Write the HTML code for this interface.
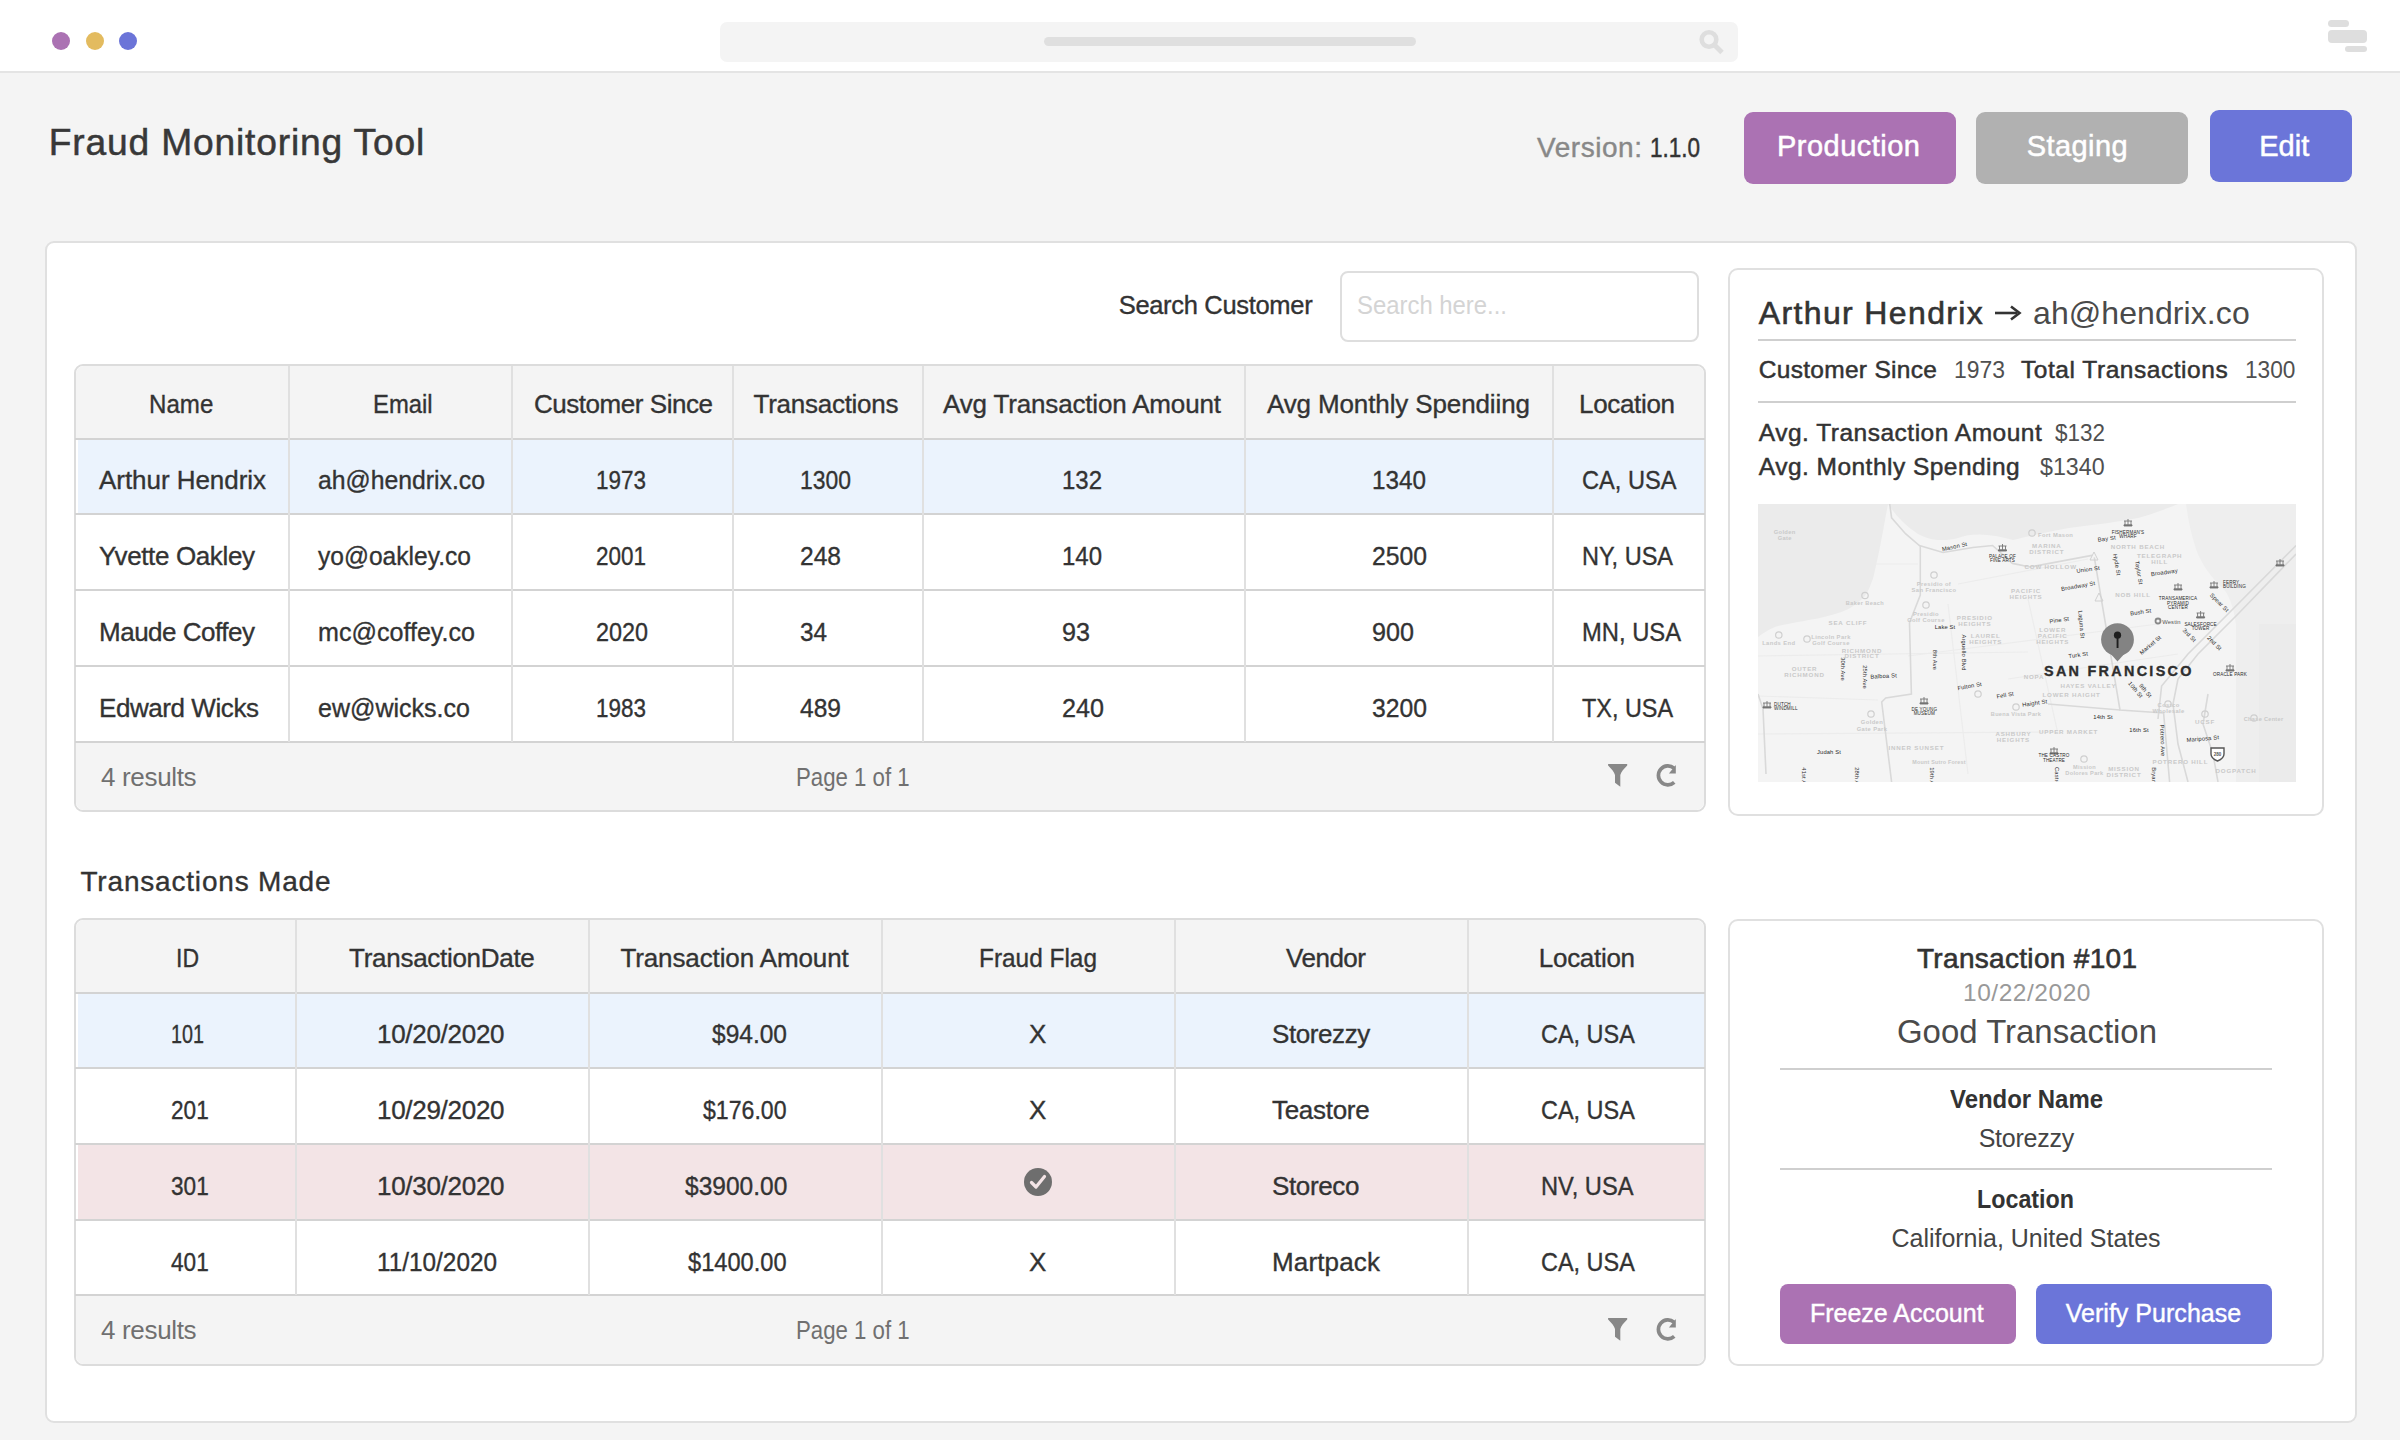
<!DOCTYPE html>
<html><head><meta charset="utf-8"><title>Fraud Monitoring Tool</title>
<style>
html,body{margin:0;padding:0;}
body{width:2400px;height:1440px;position:relative;overflow:hidden;background:#f4f4f4;font-family:"Liberation Sans",sans-serif;}
.t{position:absolute;white-space:nowrap;}
</style></head><body>
<div style="position:absolute;left:0px;top:0px;width:2400px;height:71px;background:#fff;"></div>
<div style="position:absolute;left:0px;top:71px;width:2400px;height:2px;background:#e4e4e4;"></div>
<div style="position:absolute;left:52px;top:32px;width:18px;height:18px;background:#ab72b3;border-radius:50%;"></div>
<div style="position:absolute;left:85.5px;top:32px;width:18px;height:18px;background:#e3bb5f;border-radius:50%;"></div>
<div style="position:absolute;left:119px;top:32px;width:18px;height:18px;background:#6b74d8;border-radius:50%;"></div>
<div style="position:absolute;left:720px;top:22px;width:1018px;height:40px;background:#f4f4f4;border-radius:7px;"></div>
<div style="position:absolute;left:1044px;top:37px;width:372px;height:9px;background:#dfdfdf;border-radius:5px;"></div>
<svg style="position:absolute;left:1690px;top:22px" width="40" height="40" viewBox="0 0 40 40"><circle cx="19" cy="17.5" r="7.3" fill="none" stroke="#dedede" stroke-width="4.6"/><line x1="24" y1="22.5" x2="32" y2="30.5" stroke="#dedede" stroke-width="5"/></svg>
<div style="position:absolute;left:2328px;top:20px;width:21px;height:7px;background:#dedede;border-radius:3.5px;"></div>
<div style="position:absolute;left:2328px;top:30px;width:39px;height:13px;background:#dedede;border-radius:4px;"></div>
<div style="position:absolute;left:2345px;top:46px;width:22px;height:6px;background:#dedede;border-radius:3px;"></div>
<div class="t" style="left:48.8px;top:123.5px;font-size:37.2px;line-height:37.2px;color:#383838;font-weight:normal;letter-spacing:0.82px;-webkit-text-stroke:0.5px #383838;">Fraud Monitoring Tool</div>
<div class="t" style="left:1537.0px;top:134.3px;font-size:28px;line-height:28px;color:#888;font-weight:normal;letter-spacing:0.55px;-webkit-text-stroke:0.4px #888;">Version:</div>
<div class="t" style="left:1649.5px;top:134.3px;font-size:28px;line-height:28px;color:#333;font-weight:normal;letter-spacing:0.00px;transform:scaleX(0.8029);transform-origin:0 0;-webkit-text-stroke:0.5px #333;">1.1.0</div>
<div style="position:absolute;left:1744px;top:112px;width:212px;height:72px;background:#ab72b3;border-radius:9px;"></div>
<div style="position:absolute;left:1976px;top:112px;width:212px;height:72px;background:#b1b1b1;border-radius:9px;"></div>
<div style="position:absolute;left:2210px;top:110px;width:142px;height:72px;background:#6b75d9;border-radius:9px;"></div>
<div class="t" style="left:1777.0px;top:131.8px;font-size:29px;line-height:29px;color:#fff;font-weight:normal;letter-spacing:0.48px;-webkit-text-stroke:0.5px #fff;">Production</div>
<div class="t" style="left:2026.7px;top:131.8px;font-size:29px;line-height:29px;color:#fff;font-weight:normal;letter-spacing:0.44px;-webkit-text-stroke:0.5px #fff;">Staging</div>
<div class="t" style="left:2259.2px;top:131.8px;font-size:29px;line-height:29px;color:#fff;font-weight:normal;letter-spacing:0.01px;-webkit-text-stroke:0.5px #fff;">Edit</div>
<div style="position:absolute;left:45px;top:241px;width:2312px;height:1182px;background:#fff;border:2px solid #e0e0e0;border-radius:9px;box-sizing:border-box;"></div>
<div class="t" style="left:1118.7px;top:292.9px;font-size:25.5px;line-height:25.5px;color:#333;font-weight:normal;letter-spacing:-0.32px;-webkit-text-stroke:0.35px #333;">Search Customer</div>
<div style="position:absolute;left:1340px;top:271px;width:359px;height:71px;background:#fff;border:2px solid #dedede;border-radius:8px;box-sizing:border-box;"></div>
<div class="t" style="left:1357.0px;top:292.9px;font-size:25.5px;line-height:25.5px;color:#d4d4d4;font-weight:normal;letter-spacing:0.00px;transform:scaleX(0.9365);transform-origin:0 0;">Search here...</div>
<div style="position:absolute;left:74px;top:364px;width:1632px;height:448px;background:#fff;border:2px solid #dcdcdc;border-radius:9px;box-sizing:border-box;overflow:hidden;"></div>
<div style="position:absolute;left:76px;top:366px;width:1628px;height:73px;background:#f4f4f4;border-radius:8px 8px 0 0;"></div>
<div style="position:absolute;left:76px;top:743px;width:1628px;height:67px;background:#f4f4f4;border-radius:0 0 8px 8px;"></div>
<div style="position:absolute;left:78px;top:440px;width:1626px;height:73px;background:#ebf3fd;"></div>
<div style="position:absolute;left:75px;top:438px;width:1630px;height:2px;background:#d3d3d3;"></div>
<div style="position:absolute;left:75px;top:513px;width:1630px;height:2px;background:#d3d3d3;"></div>
<div style="position:absolute;left:75px;top:589px;width:1630px;height:2px;background:#d3d3d3;"></div>
<div style="position:absolute;left:75px;top:665px;width:1630px;height:2px;background:#d3d3d3;"></div>
<div style="position:absolute;left:75px;top:741px;width:1630px;height:2px;background:#d3d3d3;"></div>
<div style="position:absolute;left:288px;top:366px;width:2px;height:376px;background:#e0e0e0;"></div>
<div style="position:absolute;left:511px;top:366px;width:2px;height:376px;background:#e0e0e0;"></div>
<div style="position:absolute;left:732px;top:366px;width:2px;height:376px;background:#e0e0e0;"></div>
<div style="position:absolute;left:922px;top:366px;width:2px;height:376px;background:#e0e0e0;"></div>
<div style="position:absolute;left:1244px;top:366px;width:2px;height:376px;background:#e0e0e0;"></div>
<div style="position:absolute;left:1552px;top:366px;width:2px;height:376px;background:#e0e0e0;"></div>
<div class="t" style="left:148.8px;top:391.0px;font-size:26px;line-height:26px;color:#333;font-weight:normal;letter-spacing:0.00px;transform:scaleX(0.9271);transform-origin:0 0;-webkit-text-stroke:0.35px #333;">Name</div>
<div class="t" style="left:373.0px;top:391.0px;font-size:26px;line-height:26px;color:#333;font-weight:normal;letter-spacing:0.00px;transform:scaleX(0.9167);transform-origin:0 0;-webkit-text-stroke:0.35px #333;">Email</div>
<div class="t" style="left:534.0px;top:391.0px;font-size:26px;line-height:26px;color:#333;font-weight:normal;letter-spacing:-0.46px;-webkit-text-stroke:0.35px #333;">Customer Since</div>
<div class="t" style="left:753.5px;top:391.0px;font-size:26px;line-height:26px;color:#333;font-weight:normal;letter-spacing:-0.26px;-webkit-text-stroke:0.35px #333;">Transactions</div>
<div class="t" style="left:943.0px;top:391.0px;font-size:26px;line-height:26px;color:#333;font-weight:normal;letter-spacing:-0.16px;-webkit-text-stroke:0.35px #333;">Avg Transaction Amount</div>
<div class="t" style="left:1266.9px;top:391.0px;font-size:26px;line-height:26px;color:#333;font-weight:normal;letter-spacing:-0.12px;-webkit-text-stroke:0.35px #333;">Avg Monthly Spendiing</div>
<div class="t" style="left:1579.0px;top:391.0px;font-size:26px;line-height:26px;color:#333;font-weight:normal;letter-spacing:-0.33px;-webkit-text-stroke:0.35px #333;">Location</div>
<div class="t" style="left:99.0px;top:466.7px;font-size:26px;line-height:26px;color:#333;font-weight:normal;letter-spacing:-0.05px;-webkit-text-stroke:0.35px #333;">Arthur Hendrix</div>
<div class="t" style="left:318.0px;top:466.7px;font-size:26px;line-height:26px;color:#333;font-weight:normal;letter-spacing:0.00px;transform:scaleX(0.9528);transform-origin:0 0;-webkit-text-stroke:0.35px #333;">ah@hendrix.co</div>
<div class="t" style="left:596.0px;top:466.7px;font-size:26px;line-height:26px;color:#333;font-weight:normal;letter-spacing:0.00px;transform:scaleX(0.8644);transform-origin:0 0;-webkit-text-stroke:0.35px #333;">1973</div>
<div class="t" style="left:800.0px;top:466.7px;font-size:26px;line-height:26px;color:#333;font-weight:normal;letter-spacing:0.00px;transform:scaleX(0.8817);transform-origin:0 0;-webkit-text-stroke:0.35px #333;">1300</div>
<div class="t" style="left:1062.0px;top:466.7px;font-size:26px;line-height:26px;color:#333;font-weight:normal;letter-spacing:0.00px;transform:scaleX(0.9221);transform-origin:0 0;-webkit-text-stroke:0.35px #333;">132</div>
<div class="t" style="left:1372.0px;top:466.7px;font-size:26px;line-height:26px;color:#333;font-weight:normal;letter-spacing:0.00px;transform:scaleX(0.9336);transform-origin:0 0;-webkit-text-stroke:0.35px #333;">1340</div>
<div class="t" style="left:1582.0px;top:466.7px;font-size:26px;line-height:26px;color:#333;font-weight:normal;letter-spacing:0.00px;transform:scaleX(0.9084);transform-origin:0 0;-webkit-text-stroke:0.35px #333;">CA, USA</div>
<div class="t" style="left:99.0px;top:542.7px;font-size:26px;line-height:26px;color:#333;font-weight:normal;letter-spacing:-0.37px;-webkit-text-stroke:0.35px #333;">Yvette Oakley</div>
<div class="t" style="left:318.0px;top:542.7px;font-size:26px;line-height:26px;color:#333;font-weight:normal;letter-spacing:0.00px;transform:scaleX(0.9458);transform-origin:0 0;-webkit-text-stroke:0.35px #333;">yo@oakley.co</div>
<div class="t" style="left:596.0px;top:542.7px;font-size:26px;line-height:26px;color:#333;font-weight:normal;letter-spacing:0.00px;transform:scaleX(0.8644);transform-origin:0 0;-webkit-text-stroke:0.35px #333;">2001</div>
<div class="t" style="left:800.0px;top:542.7px;font-size:26px;line-height:26px;color:#333;font-weight:normal;letter-spacing:0.00px;transform:scaleX(0.9451);transform-origin:0 0;-webkit-text-stroke:0.35px #333;">248</div>
<div class="t" style="left:1062.0px;top:542.7px;font-size:26px;line-height:26px;color:#333;font-weight:normal;letter-spacing:0.00px;transform:scaleX(0.9221);transform-origin:0 0;-webkit-text-stroke:0.35px #333;">140</div>
<div class="t" style="left:1372.0px;top:542.7px;font-size:26px;line-height:26px;color:#333;font-weight:normal;letter-spacing:0.00px;transform:scaleX(0.9509);transform-origin:0 0;-webkit-text-stroke:0.35px #333;">2500</div>
<div class="t" style="left:1582.0px;top:542.7px;font-size:26px;line-height:26px;color:#333;font-weight:normal;letter-spacing:0.00px;transform:scaleX(0.9039);transform-origin:0 0;-webkit-text-stroke:0.35px #333;">NY, USA</div>
<div class="t" style="left:99.0px;top:618.7px;font-size:26px;line-height:26px;color:#333;font-weight:normal;letter-spacing:-0.49px;-webkit-text-stroke:0.35px #333;">Maude Coffey</div>
<div class="t" style="left:318.0px;top:618.7px;font-size:26px;line-height:26px;color:#333;font-weight:normal;letter-spacing:0.00px;transform:scaleX(0.9649);transform-origin:0 0;-webkit-text-stroke:0.35px #333;">mc@coffey.co</div>
<div class="t" style="left:596.0px;top:618.7px;font-size:26px;line-height:26px;color:#333;font-weight:normal;letter-spacing:0.00px;transform:scaleX(0.8990);transform-origin:0 0;-webkit-text-stroke:0.35px #333;">2020</div>
<div class="t" style="left:800.0px;top:618.7px;font-size:26px;line-height:26px;color:#333;font-weight:normal;letter-spacing:0.00px;transform:scaleX(0.9336);transform-origin:0 0;-webkit-text-stroke:0.35px #333;">34</div>
<div class="t" style="left:1062.0px;top:618.7px;font-size:26px;line-height:26px;color:#333;font-weight:normal;letter-spacing:0.00px;transform:scaleX(0.9682);transform-origin:0 0;-webkit-text-stroke:0.35px #333;">93</div>
<div class="t" style="left:1372.0px;top:618.7px;font-size:26px;line-height:26px;color:#333;font-weight:normal;letter-spacing:0.00px;transform:scaleX(0.9682);transform-origin:0 0;-webkit-text-stroke:0.35px #333;">900</div>
<div class="t" style="left:1582.0px;top:618.7px;font-size:26px;line-height:26px;color:#333;font-weight:normal;letter-spacing:0.00px;transform:scaleX(0.9138);transform-origin:0 0;-webkit-text-stroke:0.35px #333;">MN, USA</div>
<div class="t" style="left:99.0px;top:694.7px;font-size:26px;line-height:26px;color:#333;font-weight:normal;letter-spacing:-0.43px;-webkit-text-stroke:0.35px #333;">Edward Wicks</div>
<div class="t" style="left:318.0px;top:694.7px;font-size:26px;line-height:26px;color:#333;font-weight:normal;letter-spacing:0.00px;transform:scaleX(0.9628);transform-origin:0 0;-webkit-text-stroke:0.35px #333;">ew@wicks.co</div>
<div class="t" style="left:596.0px;top:694.7px;font-size:26px;line-height:26px;color:#333;font-weight:normal;letter-spacing:0.00px;transform:scaleX(0.8644);transform-origin:0 0;-webkit-text-stroke:0.35px #333;">1983</div>
<div class="t" style="left:800.0px;top:694.7px;font-size:26px;line-height:26px;color:#333;font-weight:normal;letter-spacing:0.00px;transform:scaleX(0.9451);transform-origin:0 0;-webkit-text-stroke:0.35px #333;">489</div>
<div class="t" style="left:1062.0px;top:694.7px;font-size:26px;line-height:26px;color:#333;font-weight:normal;letter-spacing:0.00px;transform:scaleX(0.9682);transform-origin:0 0;-webkit-text-stroke:0.35px #333;">240</div>
<div class="t" style="left:1372.0px;top:694.7px;font-size:26px;line-height:26px;color:#333;font-weight:normal;letter-spacing:0.00px;transform:scaleX(0.9509);transform-origin:0 0;-webkit-text-stroke:0.35px #333;">3200</div>
<div class="t" style="left:1582.0px;top:694.7px;font-size:26px;line-height:26px;color:#333;font-weight:normal;letter-spacing:0.00px;transform:scaleX(0.8998);transform-origin:0 0;-webkit-text-stroke:0.35px #333;">TX, USA</div>
<div class="t" style="left:101.0px;top:764.2px;font-size:26px;line-height:26px;color:#707070;font-weight:normal;letter-spacing:-0.33px;">4 results</div>
<div class="t" style="left:795.5px;top:764.2px;font-size:26px;line-height:26px;color:#707070;font-weight:normal;letter-spacing:0.00px;transform:scaleX(0.8542);transform-origin:0 0;">Page 1 of 1</div>
<svg style="position:absolute;left:1606px;top:763px" width="24" height="26" viewBox="0 0 24 26"><path d="M2.1 1 H21.2 V2.6 C18 6 15 9 14.3 12 V23.8 L9 19.7 V12 C8.3 9 5.3 6 2.1 2.6 Z" fill="#888"/></svg>
<svg style="position:absolute;left:1654px;top:763px" width="26" height="26" viewBox="0 0 26 26"><path d="M20.25 19.46 A9.5 9.5 0 1 1 20.0 5.1" fill="none" stroke="#888" stroke-width="3.7"/><path d="M14.9 10.5 L21.8 10.5 L21.8 2 Z" fill="#888"/></svg>
<div class="t" style="left:80.5px;top:868.3px;font-size:28px;line-height:28px;color:#333;font-weight:normal;letter-spacing:0.81px;-webkit-text-stroke:0.35px #333;">Transactions Made</div>
<div style="position:absolute;left:74px;top:918px;width:1632px;height:448px;background:#fff;border:2px solid #dcdcdc;border-radius:9px;box-sizing:border-box;overflow:hidden;"></div>
<div style="position:absolute;left:76px;top:920px;width:1628px;height:73px;background:#f4f4f4;border-radius:8px 8px 0 0;"></div>
<div style="position:absolute;left:76px;top:1296px;width:1628px;height:68px;background:#f4f4f4;border-radius:0 0 8px 8px;"></div>
<div style="position:absolute;left:78px;top:994px;width:1626px;height:73px;background:#ebf3fd;"></div>
<div style="position:absolute;left:78px;top:1145px;width:1626px;height:74px;background:#f3e4e6;"></div>
<div style="position:absolute;left:75px;top:992px;width:1630px;height:2px;background:#d3d3d3;"></div>
<div style="position:absolute;left:75px;top:1067px;width:1630px;height:2px;background:#d3d3d3;"></div>
<div style="position:absolute;left:75px;top:1143px;width:1630px;height:2px;background:#d3d3d3;"></div>
<div style="position:absolute;left:75px;top:1219px;width:1630px;height:2px;background:#d3d3d3;"></div>
<div style="position:absolute;left:75px;top:1294px;width:1630px;height:2px;background:#d3d3d3;"></div>
<div style="position:absolute;left:295px;top:920px;width:2px;height:375px;background:#e0e0e0;"></div>
<div style="position:absolute;left:588px;top:920px;width:2px;height:375px;background:#e0e0e0;"></div>
<div style="position:absolute;left:881px;top:920px;width:2px;height:375px;background:#e0e0e0;"></div>
<div style="position:absolute;left:1174px;top:920px;width:2px;height:375px;background:#e0e0e0;"></div>
<div style="position:absolute;left:1467px;top:920px;width:2px;height:375px;background:#e0e0e0;"></div>
<div class="t" style="left:175.5px;top:944.7px;font-size:26px;line-height:26px;color:#333;font-weight:normal;letter-spacing:0.00px;transform:scaleX(0.8846);transform-origin:0 0;-webkit-text-stroke:0.35px #333;">ID</div>
<div class="t" style="left:349.1px;top:944.7px;font-size:26px;line-height:26px;color:#333;font-weight:normal;letter-spacing:-0.29px;-webkit-text-stroke:0.35px #333;">TransactionDate</div>
<div class="t" style="left:620.4px;top:944.7px;font-size:26px;line-height:26px;color:#333;font-weight:normal;letter-spacing:-0.11px;-webkit-text-stroke:0.35px #333;">Transaction Amount</div>
<div class="t" style="left:979.0px;top:944.7px;font-size:26px;line-height:26px;color:#333;font-weight:normal;letter-spacing:0.00px;transform:scaleX(0.9386);transform-origin:0 0;-webkit-text-stroke:0.35px #333;">Fraud Flag</div>
<div class="t" style="left:1286.0px;top:944.7px;font-size:26px;line-height:26px;color:#333;font-weight:normal;letter-spacing:-0.48px;-webkit-text-stroke:0.35px #333;">Vendor</div>
<div class="t" style="left:1538.8px;top:944.7px;font-size:26px;line-height:26px;color:#333;font-weight:normal;letter-spacing:-0.29px;-webkit-text-stroke:0.35px #333;">Location</div>
<div class="t" style="left:171.0px;top:1020.5px;font-size:26px;line-height:26px;color:#333;font-weight:normal;letter-spacing:0.00px;transform:scaleX(0.7607);transform-origin:0 0;-webkit-text-stroke:0.35px #333;">101</div>
<div class="t" style="left:377.0px;top:1020.5px;font-size:26px;line-height:26px;color:#333;font-weight:normal;letter-spacing:-0.29px;-webkit-text-stroke:0.35px #333;">10/20/2020</div>
<div class="t" style="left:712.0px;top:1020.5px;font-size:26px;line-height:26px;color:#333;font-weight:normal;letter-spacing:0.00px;transform:scaleX(0.9431);transform-origin:0 0;-webkit-text-stroke:0.35px #333;">$94.00</div>
<div class="t" style="left:1029.0px;top:1020.5px;font-size:26px;line-height:26px;color:#333;font-weight:normal;letter-spacing:0.00px;-webkit-text-stroke:0.35px #333;">X</div>
<div class="t" style="left:1272.0px;top:1020.5px;font-size:26px;line-height:26px;color:#333;font-weight:normal;letter-spacing:-0.41px;-webkit-text-stroke:0.35px #333;">Storezzy</div>
<div class="t" style="left:1540.5px;top:1020.5px;font-size:26px;line-height:26px;color:#333;font-weight:normal;letter-spacing:0.00px;transform:scaleX(0.9017);transform-origin:0 0;-webkit-text-stroke:0.35px #333;">CA, USA</div>
<div class="t" style="left:171.0px;top:1096.5px;font-size:26px;line-height:26px;color:#333;font-weight:normal;letter-spacing:0.00px;transform:scaleX(0.8691);transform-origin:0 0;-webkit-text-stroke:0.35px #333;">201</div>
<div class="t" style="left:377.0px;top:1096.5px;font-size:26px;line-height:26px;color:#333;font-weight:normal;letter-spacing:-0.29px;-webkit-text-stroke:0.35px #333;">10/29/2020</div>
<div class="t" style="left:703.4px;top:1096.5px;font-size:26px;line-height:26px;color:#333;font-weight:normal;letter-spacing:0.00px;transform:scaleX(0.8895);transform-origin:0 0;-webkit-text-stroke:0.35px #333;">$176.00</div>
<div class="t" style="left:1029.0px;top:1096.5px;font-size:26px;line-height:26px;color:#333;font-weight:normal;letter-spacing:0.00px;-webkit-text-stroke:0.35px #333;">X</div>
<div class="t" style="left:1272.0px;top:1096.5px;font-size:26px;line-height:26px;color:#333;font-weight:normal;letter-spacing:-0.30px;-webkit-text-stroke:0.35px #333;">Teastore</div>
<div class="t" style="left:1540.5px;top:1096.5px;font-size:26px;line-height:26px;color:#333;font-weight:normal;letter-spacing:0.00px;transform:scaleX(0.9017);transform-origin:0 0;-webkit-text-stroke:0.35px #333;">CA, USA</div>
<div class="t" style="left:171.0px;top:1172.5px;font-size:26px;line-height:26px;color:#333;font-weight:normal;letter-spacing:0.00px;transform:scaleX(0.8691);transform-origin:0 0;-webkit-text-stroke:0.35px #333;">301</div>
<div class="t" style="left:377.0px;top:1172.5px;font-size:26px;line-height:26px;color:#333;font-weight:normal;letter-spacing:-0.29px;-webkit-text-stroke:0.35px #333;">10/30/2020</div>
<div class="t" style="left:684.7px;top:1172.5px;font-size:26px;line-height:26px;color:#333;font-weight:normal;letter-spacing:0.00px;transform:scaleX(0.9433);transform-origin:0 0;-webkit-text-stroke:0.35px #333;">$3900.00</div>
<div class="t" style="left:1272.0px;top:1172.5px;font-size:26px;line-height:26px;color:#333;font-weight:normal;letter-spacing:-0.37px;-webkit-text-stroke:0.35px #333;">Storeco</div>
<div class="t" style="left:1540.5px;top:1172.5px;font-size:26px;line-height:26px;color:#333;font-weight:normal;letter-spacing:0.00px;transform:scaleX(0.9101);transform-origin:0 0;-webkit-text-stroke:0.35px #333;">NV, USA</div>
<div class="t" style="left:171.0px;top:1248.5px;font-size:26px;line-height:26px;color:#333;font-weight:normal;letter-spacing:0.00px;transform:scaleX(0.8691);transform-origin:0 0;-webkit-text-stroke:0.35px #333;">401</div>
<div class="t" style="left:377.0px;top:1248.5px;font-size:26px;line-height:26px;color:#333;font-weight:normal;letter-spacing:0.00px;transform:scaleX(0.9361);transform-origin:0 0;-webkit-text-stroke:0.35px #333;">11/10/2020</div>
<div class="t" style="left:688.4px;top:1248.5px;font-size:26px;line-height:26px;color:#333;font-weight:normal;letter-spacing:0.00px;transform:scaleX(0.9092);transform-origin:0 0;-webkit-text-stroke:0.35px #333;">$1400.00</div>
<div class="t" style="left:1029.0px;top:1248.5px;font-size:26px;line-height:26px;color:#333;font-weight:normal;letter-spacing:0.00px;-webkit-text-stroke:0.35px #333;">X</div>
<div class="t" style="left:1272.0px;top:1248.5px;font-size:26px;line-height:26px;color:#333;font-weight:normal;letter-spacing:0.15px;-webkit-text-stroke:0.35px #333;">Martpack</div>
<div class="t" style="left:1540.5px;top:1248.5px;font-size:26px;line-height:26px;color:#333;font-weight:normal;letter-spacing:0.00px;transform:scaleX(0.9017);transform-origin:0 0;-webkit-text-stroke:0.35px #333;">CA, USA</div>
<div class="t" style="left:101.0px;top:1317.4px;font-size:26px;line-height:26px;color:#707070;font-weight:normal;letter-spacing:-0.33px;">4 results</div>
<div class="t" style="left:795.5px;top:1317.4px;font-size:26px;line-height:26px;color:#707070;font-weight:normal;letter-spacing:0.00px;transform:scaleX(0.8542);transform-origin:0 0;">Page 1 of 1</div>
<svg style="position:absolute;left:1606px;top:1317px" width="24" height="26" viewBox="0 0 24 26"><path d="M2.1 1 H21.2 V2.6 C18 6 15 9 14.3 12 V23.8 L9 19.7 V12 C8.3 9 5.3 6 2.1 2.6 Z" fill="#888"/></svg>
<svg style="position:absolute;left:1654px;top:1317px" width="26" height="26" viewBox="0 0 26 26"><path d="M20.25 19.46 A9.5 9.5 0 1 1 20.0 5.1" fill="none" stroke="#888" stroke-width="3.7"/><path d="M14.9 10.5 L21.8 10.5 L21.8 2 Z" fill="#888"/></svg>
<svg style="position:absolute;left:1024px;top:1168px" width="28" height="28" viewBox="0 0 28 28"><circle cx="14" cy="14" r="14" fill="#6e6e6e"/><path d="M7.5 14.5 L12 19 L20.5 8.5" fill="none" stroke="#f3e4e6" stroke-width="3.2" stroke-linecap="round" stroke-linejoin="round"/></svg>
<div style="position:absolute;left:1728px;top:268px;width:596px;height:548px;background:#fff;border:2px solid #e0e0e0;border-radius:10px;box-sizing:border-box;"></div>
<div class="t" style="left:1758.8px;top:296.9px;font-size:32px;line-height:32px;color:#333;font-weight:normal;letter-spacing:1.36px;-webkit-text-stroke:0.6px #333;">Arthur Hendrix</div>
<svg style="position:absolute;left:1993px;top:303px" width="30" height="20" viewBox="0 0 30 20"><line x1="2" y1="10" x2="24" y2="10" stroke="#333" stroke-width="2.6"/><path d="M18 3.5 L26.5 10 L18 16.5" fill="none" stroke="#333" stroke-width="2.6"/></svg>
<div class="t" style="left:2033.0px;top:296.9px;font-size:32px;line-height:32px;color:#4a4a4a;font-weight:normal;letter-spacing:0.08px;">ah@hendrix.co</div>
<div style="position:absolute;left:1758px;top:339px;width:538px;height:2px;background:#cfcfcf;"></div>
<div class="t" style="left:1758.8px;top:357.6px;font-size:24.5px;line-height:24.5px;color:#333;font-weight:normal;letter-spacing:0.29px;-webkit-text-stroke:0.5px #333;">Customer Since</div>
<div class="t" style="left:1954.0px;top:357.6px;font-size:24.5px;line-height:24.5px;color:#505050;font-weight:normal;letter-spacing:0.00px;transform:scaleX(0.9357);transform-origin:0 0;">1973</div>
<div class="t" style="left:2021.0px;top:357.6px;font-size:24.5px;line-height:24.5px;color:#333;font-weight:normal;letter-spacing:0.54px;-webkit-text-stroke:0.5px #333;">Total Transactions</div>
<div class="t" style="left:2244.6px;top:357.6px;font-size:24.5px;line-height:24.5px;color:#505050;font-weight:normal;letter-spacing:0.00px;transform:scaleX(0.9247);transform-origin:0 0;">1300</div>
<div style="position:absolute;left:1758px;top:401px;width:538px;height:2px;background:#cfcfcf;"></div>
<div class="t" style="left:1758.8px;top:421.3px;font-size:24.5px;line-height:24.5px;color:#333;font-weight:normal;letter-spacing:0.50px;-webkit-text-stroke:0.5px #333;">Avg. Transaction Amount</div>
<div class="t" style="left:2055.0px;top:421.3px;font-size:24.5px;line-height:24.5px;color:#505050;font-weight:normal;letter-spacing:0.00px;transform:scaleX(0.9174);transform-origin:0 0;">$132</div>
<div class="t" style="left:1758.8px;top:455.1px;font-size:24.5px;line-height:24.5px;color:#333;font-weight:normal;letter-spacing:0.47px;-webkit-text-stroke:0.5px #333;">Avg. Monthly Spending</div>
<div class="t" style="left:2040.4px;top:455.1px;font-size:24.5px;line-height:24.5px;color:#505050;font-weight:normal;letter-spacing:0.00px;transform:scaleX(0.9482);transform-origin:0 0;">$1340</div>
<svg style="position:absolute;left:1758px;top:504px" width="538" height="278" viewBox="0 0 538 278" font-family="Liberation Sans, sans-serif"><rect width="538" height="278" fill="#f4f4f4"/><path d="M0 0 H130 L127 16 C122 45 118 62 116 71 C112 84 108 92 104 95 C95 103 88 107 80 109 C65 114 55 115 46 117 C30 120 22 121 17 123 C10 126 5 129 0 133 Z" fill="#ebebeb"/><path d="M130 0 H420 C405 6 395 10 380 14 C350 20 320 22 300 26 C280 30 268 33 255 36 C235 30 215 28 200 34 C185 38 170 36 160 30 C148 22 138 12 130 0 Z" fill="#ebebeb"/><path d="M428 0 H538 V278 H478 V120 C476 105 472 95 468 88 C455 75 444 62 438 45 C433 30 430 15 428 0 Z" fill="#eeeeee"/><path d="M501 120 H538 V278 H501 Z" fill="#ebebeb"/><line x1="0" y1="152" x2="270" y2="148" stroke="#ececec" stroke-width="1.2"/><line x1="0" y1="230" x2="300" y2="228" stroke="#ececec" stroke-width="1.2"/><line x1="20" y1="60" x2="160" y2="60" stroke="#ececec" stroke-width="1.2"/><line x1="150" y1="152" x2="400" y2="120" stroke="#ececec" stroke-width="1.2"/><line x1="200" y1="80" x2="330" y2="55" stroke="#ececec" stroke-width="1.2"/><line x1="250" y1="175" x2="420" y2="150" stroke="#ececec" stroke-width="1.2"/><line x1="0" y1="192" x2="120" y2="196" stroke="#ececec" stroke-width="1.2"/><line x1="270" y1="95" x2="300" y2="230" stroke="#ececec" stroke-width="1.2"/><line x1="190" y1="100" x2="210" y2="270" stroke="#ececec" stroke-width="1.2"/><path d="M131.7 0 L133.6 13.8 L147.5 29.7 L161.4 41.5 L185 48.5 L214.8 43.5 L234.6 41.5 L254.4 59.4 L272 63 L334 51.4" fill="none" stroke="#d9d9d9" stroke-width="1.6"/><path d="M162.3 41.5 L162.3 91 L151.5 118.8 L153.4 190 L127.7 194 L123.7 198 L133.6 278" fill="none" stroke="#d9d9d9" stroke-width="1.6"/><path d="M336.3 53.4 L362 206 L405.6 209 L411.6 278" fill="none" stroke="#d9d9d9" stroke-width="1.6"/><path d="M538 41.5 L470 110 L430 150 L403.6 182 L400 215" fill="none" stroke="#d9d9d9" stroke-width="1.6"/><path d="M538 50 L480 110 L440 150 L420 175" fill="none" stroke="#d9d9d9" stroke-width="1.6"/><path d="M420 175 L415 200 L420 240 L430 278" fill="none" stroke="#d9d9d9" stroke-width="1.6"/><path d="M450 190 L445 220 L455 250 L460 278" fill="none" stroke="#d9d9d9" stroke-width="1.6"/><path d="M0 190 L5 205 L8 270" fill="none" stroke="#d9d9d9" stroke-width="1.6"/><path d="M290 200 L362 206" fill="none" stroke="#d9d9d9" stroke-width="1.6"/><text x="197" y="44.5" font-size="5.8" font-weight="normal" fill="#2a2a2a" text-anchor="middle" letter-spacing="0.15" transform="rotate(-12 197 44.5)">Mason St</text><text x="244.5" y="53.5" font-size="4.6" font-weight="normal" fill="#2a2a2a" text-anchor="middle" letter-spacing="0.15">PALACE OF</text><text x="244.5" y="57.8" font-size="4.6" font-weight="normal" fill="#2a2a2a" text-anchor="middle" letter-spacing="0.15">FINE ARTS</text><text x="187" y="124.7" font-size="5.8" font-weight="normal" fill="#2a2a2a" text-anchor="middle" letter-spacing="0.15">Lake St</text><text x="175" y="156" font-size="5.8" font-weight="normal" fill="#2a2a2a" text-anchor="middle" letter-spacing="0.15" transform="rotate(90 175 156)">8th Ave</text><text x="204" y="148.5" font-size="5.8" font-weight="normal" fill="#2a2a2a" text-anchor="middle" letter-spacing="0.15" transform="rotate(90 204 148.5)">Arguello Blvd</text><text x="83" y="165" font-size="5.8" font-weight="normal" fill="#2a2a2a" text-anchor="middle" letter-spacing="0.15" transform="rotate(90 83 165)">30th Ave</text><text x="105" y="173" font-size="5.8" font-weight="normal" fill="#2a2a2a" text-anchor="middle" letter-spacing="0.15" transform="rotate(90 105 173)">25th Ave</text><text x="125.7" y="174" font-size="5.8" font-weight="normal" fill="#2a2a2a" text-anchor="middle" letter-spacing="0.15" transform="rotate(-3 125.7 174)">Balboa St</text><text x="212" y="184" font-size="5.8" font-weight="normal" fill="#2a2a2a" text-anchor="middle" letter-spacing="0.15" transform="rotate(-10 212 184)">Fulton St</text><text x="247.5" y="193" font-size="5.8" font-weight="normal" fill="#2a2a2a" text-anchor="middle" letter-spacing="0.15" transform="rotate(-10 247.5 193)">Fell St</text><text x="16" y="201.5" font-size="4.6" font-weight="normal" fill="#2a2a2a" text-anchor="start" letter-spacing="0.15">DUTCH</text><text x="16" y="206" font-size="4.6" font-weight="normal" fill="#2a2a2a" text-anchor="start" letter-spacing="0.15">WINDMILL</text><text x="166.3" y="206.5" font-size="4.6" font-weight="normal" fill="#2a2a2a" text-anchor="middle" letter-spacing="0.15">DE YOUNG</text><text x="166.3" y="211" font-size="4.6" font-weight="normal" fill="#2a2a2a" text-anchor="middle" letter-spacing="0.15">MUSEUM</text><text x="71" y="250" font-size="5.8" font-weight="normal" fill="#2a2a2a" text-anchor="middle" letter-spacing="0.15">Judah St</text><text x="44" y="275" font-size="5.8" font-weight="normal" fill="#2a2a2a" text-anchor="middle" letter-spacing="0.15" transform="rotate(90 44 275)">41st Ave</text><text x="97" y="275" font-size="5.8" font-weight="normal" fill="#2a2a2a" text-anchor="middle" letter-spacing="0.15" transform="rotate(90 97 275)">28th Ave</text><text x="172" y="275" font-size="5.8" font-weight="normal" fill="#2a2a2a" text-anchor="middle" letter-spacing="0.15" transform="rotate(90 172 275)">19th Ave</text><text x="370" y="29.7" font-size="4.6" font-weight="normal" fill="#2a2a2a" text-anchor="middle" letter-spacing="0.15">FISHERMAN'S</text><text x="370" y="34" font-size="4.6" font-weight="normal" fill="#2a2a2a" text-anchor="middle" letter-spacing="0.15">WHARF</text><text x="349" y="36.6" font-size="5.8" font-weight="normal" fill="#2a2a2a" text-anchor="middle" letter-spacing="0.15" transform="rotate(-8 349 36.6)">Bay St</text><text x="330.4" y="67.3" font-size="5.8" font-weight="normal" fill="#2a2a2a" text-anchor="middle" letter-spacing="0.15" transform="rotate(-8 330.4 67.3)">Union St</text><text x="357" y="61" font-size="5.8" font-weight="normal" fill="#2a2a2a" text-anchor="middle" letter-spacing="0.15" transform="rotate(80 357 61)">Hyde St</text><text x="379" y="69" font-size="5.8" font-weight="normal" fill="#2a2a2a" text-anchor="middle" letter-spacing="0.15" transform="rotate(80 379 69)">Taylor St</text><text x="406.6" y="70.3" font-size="5.8" font-weight="normal" fill="#2a2a2a" text-anchor="middle" letter-spacing="0.15" transform="rotate(-8 406.6 70.3)">Broadway</text><text x="320.5" y="84" font-size="5.8" font-weight="normal" fill="#2a2a2a" text-anchor="middle" letter-spacing="0.15" transform="rotate(-10 320.5 84)">Broadway St</text><text x="420" y="96" font-size="4.6" font-weight="normal" fill="#2a2a2a" text-anchor="middle" letter-spacing="0.15">TRANSAMERICA</text><text x="420" y="100.5" font-size="4.6" font-weight="normal" fill="#2a2a2a" text-anchor="middle" letter-spacing="0.15">PYRAMID</text><text x="420" y="105" font-size="4.6" font-weight="normal" fill="#2a2a2a" text-anchor="middle" letter-spacing="0.15">CENTER</text><text x="465" y="79.6" font-size="4.6" font-weight="normal" fill="#2a2a2a" text-anchor="start" letter-spacing="0.15">FERRY</text><text x="465" y="84" font-size="4.6" font-weight="normal" fill="#2a2a2a" text-anchor="start" letter-spacing="0.15">BUILDING</text><text x="460" y="100" font-size="5.8" font-weight="normal" fill="#2a2a2a" text-anchor="middle" letter-spacing="0.15" transform="rotate(45 460 100)">Spear St</text><text x="383" y="110" font-size="5.8" font-weight="normal" fill="#2a2a2a" text-anchor="middle" letter-spacing="0.15" transform="rotate(-8 383 110)">Bush St</text><text x="413.5" y="120" font-size="5.8" font-weight="normal" fill="#555" text-anchor="middle" letter-spacing="0.15">Westin</text><text x="442.6" y="122" font-size="4.6" font-weight="normal" fill="#2a2a2a" text-anchor="middle" letter-spacing="0.15">SALESFORCE</text><text x="442.6" y="126.4" font-size="4.6" font-weight="normal" fill="#2a2a2a" text-anchor="middle" letter-spacing="0.15">TOWER</text><text x="301.6" y="118" font-size="5.8" font-weight="normal" fill="#2a2a2a" text-anchor="middle" letter-spacing="0.15" transform="rotate(-8 301.6 118)">Pine St</text><text x="321.5" y="120.7" font-size="5.8" font-weight="normal" fill="#2a2a2a" text-anchor="middle" letter-spacing="0.15" transform="rotate(85 321.5 120.7)">Laguna St</text><text x="393.7" y="142.5" font-size="5.8" font-weight="normal" fill="#2a2a2a" text-anchor="middle" letter-spacing="0.15" transform="rotate(-40 393.7 142.5)">Market St</text><text x="430" y="132.6" font-size="5.8" font-weight="normal" fill="#2a2a2a" text-anchor="middle" letter-spacing="0.15" transform="rotate(45 430 132.6)">3rd St</text><text x="455" y="140.6" font-size="5.8" font-weight="normal" fill="#2a2a2a" text-anchor="middle" letter-spacing="0.15" transform="rotate(45 455 140.6)">2nd St</text><text x="320.5" y="152.9" font-size="5.8" font-weight="normal" fill="#2a2a2a" text-anchor="middle" letter-spacing="0.15" transform="rotate(-8 320.5 152.9)">Turk St</text><text x="472" y="172" font-size="4.6" font-weight="normal" fill="#2a2a2a" text-anchor="middle" letter-spacing="0.15">ORACLE PARK</text><text x="376" y="187" font-size="5.8" font-weight="normal" fill="#2a2a2a" text-anchor="middle" letter-spacing="0.15" transform="rotate(50 376 187)">10th St</text><text x="386" y="188" font-size="5.8" font-weight="normal" fill="#2a2a2a" text-anchor="middle" letter-spacing="0.15" transform="rotate(50 386 188)">9th St</text><text x="277" y="201" font-size="5.8" font-weight="normal" fill="#2a2a2a" text-anchor="middle" letter-spacing="0.15" transform="rotate(-8 277 201)">Haight St</text><text x="345" y="215" font-size="5.8" font-weight="normal" fill="#2a2a2a" text-anchor="middle" letter-spacing="0.15">14th St</text><text x="381" y="228" font-size="5.8" font-weight="normal" fill="#2a2a2a" text-anchor="middle" letter-spacing="0.15">16th St</text><text x="402.6" y="236.6" font-size="5.8" font-weight="normal" fill="#2a2a2a" text-anchor="middle" letter-spacing="0.15" transform="rotate(88 402.6 236.6)">Potrero Ave</text><text x="445" y="236.6" font-size="5.8" font-weight="normal" fill="#2a2a2a" text-anchor="middle" letter-spacing="0.15" transform="rotate(-5 445 236.6)">Mariposa St</text><text x="296" y="253.4" font-size="4.6" font-weight="normal" fill="#2a2a2a" text-anchor="middle" letter-spacing="0.15">THE CASTRO</text><text x="296" y="257.8" font-size="4.6" font-weight="normal" fill="#2a2a2a" text-anchor="middle" letter-spacing="0.15">THEATRE</text><text x="297" y="272" font-size="5.8" font-weight="normal" fill="#2a2a2a" text-anchor="middle" letter-spacing="0.15" transform="rotate(90 297 272)">Castro</text><text x="394" y="272" font-size="5.8" font-weight="normal" fill="#2a2a2a" text-anchor="middle" letter-spacing="0.15" transform="rotate(90 394 272)">Bryant</text><text x="26.7" y="29.7" font-size="5.8" font-weight="bold" fill="#c9c9c9" text-anchor="middle" letter-spacing="0.3">Golden</text><text x="26.7" y="35.6" font-size="5.8" font-weight="bold" fill="#c9c9c9" text-anchor="middle" letter-spacing="0.3">Gate</text><text x="107" y="101" font-size="5.6" font-weight="bold" fill="#c9c9c9" text-anchor="middle" letter-spacing="0.4">Baker Beach</text><text x="176" y="82" font-size="5.8" font-weight="bold" fill="#c9c9c9" text-anchor="middle" letter-spacing="0.4">Presidio of</text><text x="176" y="88" font-size="5.8" font-weight="bold" fill="#c9c9c9" text-anchor="middle" letter-spacing="0.4">San Francisco</text><text x="168" y="112" font-size="5.8" font-weight="bold" fill="#c9c9c9" text-anchor="middle" letter-spacing="0.4">Presidio</text><text x="168" y="118" font-size="5.8" font-weight="bold" fill="#c9c9c9" text-anchor="middle" letter-spacing="0.4">Golf Course</text><text x="90" y="120.8" font-size="6.2" font-weight="bold" fill="#c9c9c9" text-anchor="middle" letter-spacing="0.8">SEA CLIFF</text><text x="20.8" y="140.6" font-size="5.8" font-weight="bold" fill="#c9c9c9" text-anchor="middle" letter-spacing="0.4">Lands End</text><text x="73" y="134.6" font-size="5.8" font-weight="bold" fill="#c9c9c9" text-anchor="middle" letter-spacing="0.4">Lincoln Park</text><text x="73" y="140.6" font-size="5.8" font-weight="bold" fill="#c9c9c9" text-anchor="middle" letter-spacing="0.4">Golf Course</text><text x="104" y="148.5" font-size="6.2" font-weight="bold" fill="#c9c9c9" text-anchor="middle" letter-spacing="0.8">RICHMOND</text><text x="104" y="154.4" font-size="6.2" font-weight="bold" fill="#c9c9c9" text-anchor="middle" letter-spacing="0.8">DISTRICT</text><text x="46.5" y="167" font-size="6.2" font-weight="bold" fill="#c9c9c9" text-anchor="middle" letter-spacing="0.8">OUTER</text><text x="46.5" y="173" font-size="6.2" font-weight="bold" fill="#c9c9c9" text-anchor="middle" letter-spacing="0.8">RICHMOND</text><text x="216.8" y="115.8" font-size="6.2" font-weight="bold" fill="#c9c9c9" text-anchor="middle" letter-spacing="0.8">PRESIDIO</text><text x="216.8" y="121.8" font-size="6.2" font-weight="bold" fill="#c9c9c9" text-anchor="middle" letter-spacing="0.8">HEIGHTS</text><text x="227.7" y="134" font-size="6.2" font-weight="bold" fill="#c9c9c9" text-anchor="middle" letter-spacing="0.8">LAUREL</text><text x="227.7" y="140" font-size="6.2" font-weight="bold" fill="#c9c9c9" text-anchor="middle" letter-spacing="0.8">HEIGHTS</text><text x="268" y="89" font-size="6.2" font-weight="bold" fill="#c9c9c9" text-anchor="middle" letter-spacing="0.8">PACIFIC</text><text x="268" y="95" font-size="6.2" font-weight="bold" fill="#c9c9c9" text-anchor="middle" letter-spacing="0.8">HEIGHTS</text><text x="114" y="220" font-size="5.8" font-weight="bold" fill="#c9c9c9" text-anchor="middle" letter-spacing="0.4">Golden</text><text x="114" y="226.7" font-size="5.8" font-weight="bold" fill="#c9c9c9" text-anchor="middle" letter-spacing="0.4">Gate Park</text><text x="158.4" y="246" font-size="6.2" font-weight="bold" fill="#c9c9c9" text-anchor="middle" letter-spacing="0.8">INNER SUNSET</text><text x="181" y="259.8" font-size="5.4" font-weight="bold" fill="#c9c9c9" text-anchor="middle" letter-spacing="0.2">Mount Sutro Forest</text><text x="255.4" y="231.7" font-size="6.2" font-weight="bold" fill="#c9c9c9" text-anchor="middle" letter-spacing="0.8">ASHBURY</text><text x="255.4" y="237.6" font-size="6.2" font-weight="bold" fill="#c9c9c9" text-anchor="middle" letter-spacing="0.8">HEIGHTS</text><text x="258" y="212" font-size="5.6" font-weight="bold" fill="#c9c9c9" text-anchor="middle" letter-spacing="0.3">Buena Vista Park</text><text x="297.7" y="33" font-size="5.8" font-weight="bold" fill="#c9c9c9" text-anchor="middle" letter-spacing="0.4">Fort Mason</text><text x="288.8" y="43.5" font-size="6.2" font-weight="bold" fill="#c9c9c9" text-anchor="middle" letter-spacing="0.8">MARINA</text><text x="288.8" y="49.5" font-size="6.2" font-weight="bold" fill="#c9c9c9" text-anchor="middle" letter-spacing="0.8">DISTRICT</text><text x="292.7" y="65.3" font-size="6.2" font-weight="bold" fill="#c9c9c9" text-anchor="middle" letter-spacing="0.8">COW HOLLOW</text><text x="379.9" y="44.9" font-size="6.2" font-weight="bold" fill="#c9c9c9" text-anchor="middle" letter-spacing="0.8">NORTH BEACH</text><text x="401.7" y="54" font-size="6.2" font-weight="bold" fill="#c9c9c9" text-anchor="middle" letter-spacing="0.8">TELEGRAPH</text><text x="401.7" y="60" font-size="6.2" font-weight="bold" fill="#c9c9c9" text-anchor="middle" letter-spacing="0.8">HILL</text><text x="375" y="93.4" font-size="6.2" font-weight="bold" fill="#c9c9c9" text-anchor="middle" letter-spacing="0.8">NOB HILL</text><text x="294.7" y="127.7" font-size="6.2" font-weight="bold" fill="#c9c9c9" text-anchor="middle" letter-spacing="0.8">LOWER</text><text x="294.7" y="133.6" font-size="6.2" font-weight="bold" fill="#c9c9c9" text-anchor="middle" letter-spacing="0.8">PACIFIC</text><text x="294.7" y="139.6" font-size="6.2" font-weight="bold" fill="#c9c9c9" text-anchor="middle" letter-spacing="0.8">HEIGHTS</text><text x="276" y="175" font-size="6.2" font-weight="bold" fill="#c9c9c9" text-anchor="middle" letter-spacing="0.8">NOPA</text><text x="330.4" y="184" font-size="6.2" font-weight="bold" fill="#c9c9c9" text-anchor="middle" letter-spacing="0.8">HAYES VALLEY</text><text x="313.5" y="193" font-size="6.2" font-weight="bold" fill="#c9c9c9" text-anchor="middle" letter-spacing="0.8">LOWER HAIGHT</text><text x="410.6" y="202.6" font-size="5.8" font-weight="bold" fill="#c9c9c9" text-anchor="middle" letter-spacing="0.4">Costco</text><text x="410.6" y="208.5" font-size="5.8" font-weight="bold" fill="#c9c9c9" text-anchor="middle" letter-spacing="0.4">Wholesale</text><text x="447" y="220" font-size="6.2" font-weight="bold" fill="#c9c9c9" text-anchor="middle" letter-spacing="0.8">UCSF</text><text x="505.6" y="217" font-size="5.6" font-weight="bold" fill="#c9c9c9" text-anchor="middle" letter-spacing="0.3">Chase Center</text><text x="310.6" y="230" font-size="6.2" font-weight="bold" fill="#c9c9c9" text-anchor="middle" letter-spacing="0.8">UPPER MARKET</text><text x="326.4" y="265" font-size="5.6" font-weight="bold" fill="#c9c9c9" text-anchor="middle" letter-spacing="0.3">Mission</text><text x="326.4" y="271" font-size="5.6" font-weight="bold" fill="#c9c9c9" text-anchor="middle" letter-spacing="0.3">Dolores Park</text><text x="366" y="266.7" font-size="6.2" font-weight="bold" fill="#c9c9c9" text-anchor="middle" letter-spacing="0.8">MISSION</text><text x="366" y="272.6" font-size="6.2" font-weight="bold" fill="#c9c9c9" text-anchor="middle" letter-spacing="0.8">DISTRICT</text><text x="422.4" y="260.4" font-size="6.2" font-weight="bold" fill="#c9c9c9" text-anchor="middle" letter-spacing="0.8">POTRERO HILL</text><text x="478" y="268.7" font-size="6.2" font-weight="bold" fill="#c9c9c9" text-anchor="middle" letter-spacing="0.8">DOGPATCH</text><circle cx="107" cy="91.5" r="3.2" fill="none" stroke="#cfcfcf" stroke-width="1.2"/><circle cx="176" cy="71" r="3.2" fill="none" stroke="#cfcfcf" stroke-width="1.2"/><circle cx="168" cy="101" r="3.2" fill="none" stroke="#cfcfcf" stroke-width="1.2"/><circle cx="20.8" cy="131" r="3.2" fill="none" stroke="#cfcfcf" stroke-width="1.2"/><circle cx="49" cy="135" r="3.2" fill="none" stroke="#cfcfcf" stroke-width="1.2"/><circle cx="113" cy="210" r="3.2" fill="none" stroke="#cfcfcf" stroke-width="1.2"/><circle cx="258" cy="203" r="3.2" fill="none" stroke="#cfcfcf" stroke-width="1.2"/><circle cx="274" cy="29" r="3.2" fill="none" stroke="#cfcfcf" stroke-width="1.2"/><circle cx="410" cy="200" r="3.2" fill="none" stroke="#cfcfcf" stroke-width="1.2"/><circle cx="447" cy="210" r="3.2" fill="none" stroke="#cfcfcf" stroke-width="1.2"/><circle cx="496" cy="214" r="3.2" fill="none" stroke="#cfcfcf" stroke-width="1.2"/><circle cx="326" cy="255" r="3.2" fill="none" stroke="#cfcfcf" stroke-width="1.2"/><circle cx="220" cy="190" r="3.2" fill="none" stroke="#cfcfcf" stroke-width="1.2"/><path d="M240.5 47 H248.5 V45.8 H240.5Z M241.5 45.8 V42 M244.5 45.8 V40 M247.5 45.8 V42 M240.5 42 H248.5" fill="#555" stroke="#555" stroke-width="0.9" opacity="0.8"/><path d="M366 22 H374 V20.8 H366Z M367 20.8 V17 M370 20.8 V15 M373 20.8 V17 M366 17 H374" fill="#555" stroke="#555" stroke-width="0.9" opacity="0.8"/><path d="M416 86 H424 V84.8 H416Z M417 84.8 V81 M420 84.8 V79 M423 84.8 V81 M416 81 H424" fill="#555" stroke="#555" stroke-width="0.9" opacity="0.8"/><path d="M452 84 H460 V82.8 H452Z M453 82.8 V79 M456 82.8 V77 M459 82.8 V79 M452 79 H460" fill="#555" stroke="#555" stroke-width="0.9" opacity="0.8"/><path d="M438.6 114 H446.6 V112.8 H438.6Z M439.6 112.8 V109 M442.6 112.8 V107 M445.6 112.8 V109 M438.6 109 H446.6" fill="#555" stroke="#555" stroke-width="0.9" opacity="0.8"/><path d="M468 167 H476 V165.8 H468Z M469 165.8 V162 M472 165.8 V160 M475 165.8 V162 M468 162 H476" fill="#555" stroke="#555" stroke-width="0.9" opacity="0.8"/><path d="M162 200 H170 V198.8 H162Z M163 198.8 V195 M166 198.8 V193 M169 198.8 V195 M162 195 H170" fill="#555" stroke="#555" stroke-width="0.9" opacity="0.8"/><path d="M5 204 H13 V202.8 H5Z M6 202.8 V199 M9 202.8 V197 M12 202.8 V199 M5 199 H13" fill="#555" stroke="#555" stroke-width="0.9" opacity="0.8"/><path d="M292 250 H300 V248.8 H292Z M293 248.8 V245 M296 248.8 V243 M299 248.8 V245 M292 245 H300" fill="#555" stroke="#555" stroke-width="0.9" opacity="0.8"/><path d="M518 62 H526 V60.8 H518Z M519 60.8 V57 M522 60.8 V55 M525 60.8 V57 M518 57 H526" fill="#555" stroke="#555" stroke-width="0.9" opacity="0.8"/><circle cx="400" cy="117" r="3.4" fill="#888"/><circle cx="400" cy="117" r="1.6" fill="#f4f4f4"/><path d="M453 244 H466 V250 C466 254 462 256 459.5 257 C457 256 453 254 453 250 Z" fill="#fff" stroke="#555" stroke-width="1.4"/><text x="459.5" y="251.5" font-size="4.5" font-weight="bold" fill="#555" text-anchor="middle">280</text><path d="M336 48 L340 56 L332 56 Z" fill="none" stroke="#d0d0d0" stroke-width="1"/><path d="M341 89 L345 97 L337 97 Z" fill="none" stroke="#d0d0d0" stroke-width="1"/><circle cx="359.5" cy="135.6" r="16.4" fill="#838383"/><path d="M351 148 L359.5 157.4 L368 148Z" fill="#838383"/><circle cx="359.5" cy="131.2" r="3.6" fill="#1e1e1e"/><rect x="358.6" y="131" width="1.9" height="13" fill="#1e1e1e"/><text x="286" y="171.8" font-size="14.4" font-weight="bold" fill="#2e2e2e" stroke="#2e2e2e" stroke-width="0.35" letter-spacing="2.29">SAN FRANCISCO</text></svg>
<div style="position:absolute;left:1728px;top:919px;width:596px;height:447px;background:#fff;border:2px solid #e0e0e0;border-radius:10px;box-sizing:border-box;"></div>
<div class="t" style="left:1917.0px;top:944.9px;font-size:28px;line-height:28px;color:#333;font-weight:normal;letter-spacing:0.31px;-webkit-text-stroke:0.6px #333;">Transaction #101</div>
<div class="t" style="left:1963.0px;top:981.3px;font-size:24.5px;line-height:24.5px;color:#999;font-weight:normal;letter-spacing:0.54px;">10/22/2020</div>
<div class="t" style="left:1896.9px;top:1013.7px;font-size:34px;line-height:34px;color:#4a4a4a;font-weight:normal;letter-spacing:0.00px;transform:scaleX(0.9688);transform-origin:0 0;">Good Transaction</div>
<div style="position:absolute;left:1780px;top:1068px;width:492px;height:2px;background:#cfcfcf;"></div>
<div class="t" style="left:1949.5px;top:1086.8px;font-size:25px;line-height:25px;color:#333;font-weight:bold;letter-spacing:0.00px;transform:scaleX(0.9576);transform-origin:0 0;">Vendor Name</div>
<div class="t" style="left:1978.7px;top:1126.3px;font-size:25px;line-height:25px;color:#444;font-weight:normal;letter-spacing:-0.24px;">Storezzy</div>
<div style="position:absolute;left:1780px;top:1168px;width:492px;height:2px;background:#cfcfcf;"></div>
<div class="t" style="left:1977.0px;top:1187.0px;font-size:25px;line-height:25px;color:#333;font-weight:bold;letter-spacing:0.00px;transform:scaleX(0.9312);transform-origin:0 0;">Location</div>
<div class="t" style="left:1891.5px;top:1226.4px;font-size:25px;line-height:25px;color:#444;font-weight:normal;letter-spacing:-0.02px;">California, United States</div>
<div style="position:absolute;left:1780px;top:1284px;width:236px;height:60px;background:#ab72b3;border-radius:8px;"></div>
<div style="position:absolute;left:2036px;top:1284px;width:236px;height:60px;background:#6b75d9;border-radius:8px;"></div>
<div class="t" style="left:1810.0px;top:1300.6px;font-size:25px;line-height:25px;color:#fff;font-weight:normal;letter-spacing:-0.01px;-webkit-text-stroke:0.4px #fff;">Freeze Account</div>
<div class="t" style="left:2065.7px;top:1300.6px;font-size:25px;line-height:25px;color:#fff;font-weight:normal;letter-spacing:0.03px;-webkit-text-stroke:0.4px #fff;">Verify Purchase</div>
</body></html>
